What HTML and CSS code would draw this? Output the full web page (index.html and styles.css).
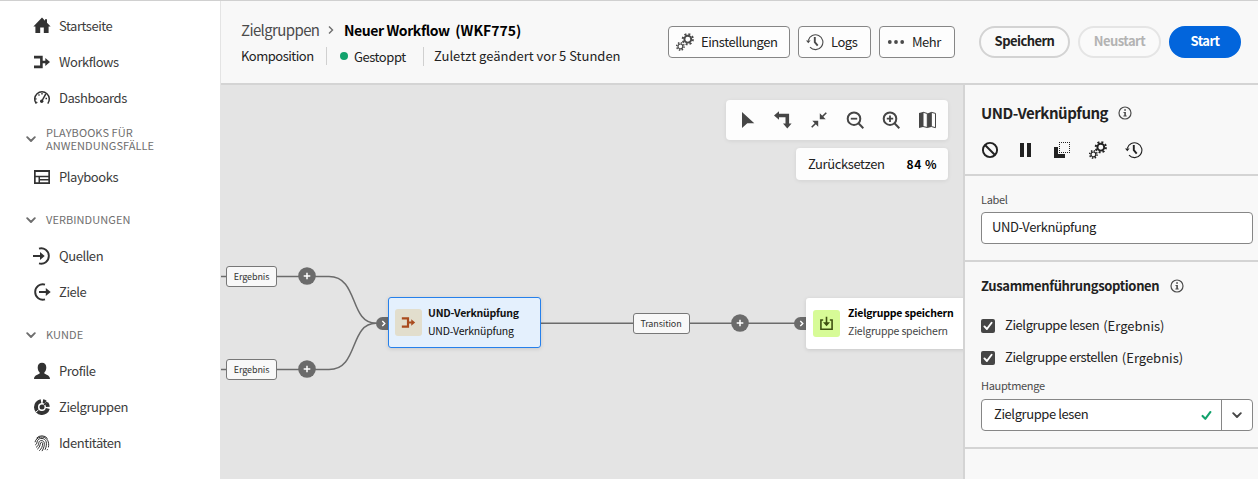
FILE: index.html
```html
<!DOCTYPE html>
<html lang="de">
<head>
<meta charset="utf-8">
<title>Neuer Workflow (WKF775)</title>
<link rel="stylesheet" href="styles.css">
</head>
<body>
<svg class="defs" width="0" height="0">
  <symbol id="gears" viewBox="0 0 18 18">
    <g fill="none" stroke="currentColor">
      <circle cx="11.8" cy="6.2" r="3.4" stroke-width="1.9"/>
      <circle cx="11.8" cy="6.2" r="5.100" stroke-width="2" stroke-dasharray="2 2"/>
      <circle cx="4.4" cy="13.4" r="2.4" stroke-width="1.2"/>
      <circle cx="4.4" cy="13.4" r="3.700" stroke-width="1.6" stroke-dasharray="1.450 1.450"/>
    </g>
  </symbol>
  <symbol id="history" viewBox="0 0 18 18">
    <path d="M2.300 7.500A7.400 7.400 0 1 1 4 14.200" fill="none" stroke="currentColor" stroke-width="1.100"/>
    <path d="M0 7.500h4.600L2.300 10.300z" fill="currentColor"/>
    <path d="M8.800 4v5.200l2.900 3.400" fill="none" stroke="currentColor" stroke-width="1.900"/>
  </symbol>
  <symbol id="merge" viewBox="0 0 18 18">
    <path d="M1 4.100h7.400v9.800H1M8.400 9H13" fill="none" stroke="currentColor" stroke-width="2.600"/>
    <path d="M12.300 5L17 9l-4.700 4z" fill="currentColor"/>
  </symbol>
  <symbol id="chevron" viewBox="0 0 10 10">
    <path d="M1.200 3.200L5 7l3.800-3.800" fill="none" stroke="currentColor" stroke-width="1.900" stroke-linecap="round" stroke-linejoin="round"/>
  </symbol>
  <symbol id="info" viewBox="0 0 14 14">
    <circle cx="7" cy="7" r="6" fill="none" stroke="currentColor" stroke-width="1.200"/>
    <path d="M6.200 3.300h1.700v1.500H6.200zM5.500 6h2.400v3.600h.8v1H5.400v-1h.9V7h-.8z" fill="currentColor"/>
  </symbol>
  <symbol id="check" viewBox="0 0 10 10">
    <path d="M1.400 5.400L3.900 8l4.700-6.200" fill="none" stroke="currentColor" stroke-width="1.900" stroke-linecap="round" stroke-linejoin="round"/>
  </symbol>
  <symbol id="plus" viewBox="0 0 18 18">
    <circle cx="9" cy="9" r="8.800" fill="#6b6b6b"/>
    <path d="M9 5.700v6.600M5.700 9h6.600" stroke="#fff" stroke-width="1.500"/>
  </symbol>
</svg>
<div class="app">
  <nav class="sidebar">
    <a class="nav-item"><svg class="nav-icon" viewBox="0 0 18 18"><path d="M9 .5L.4 9.600h2V16h4.800v-5.400h3.600V16h4.800V9.600h2L14 5.800V2.200h-2v1.500z"/></svg>Startseite</a>
    <a class="nav-item"><svg class="nav-icon"><use href="#merge"/></svg>Workflows</a>
    <a class="nav-item"><svg class="nav-icon" viewBox="0 0 18 18"><g fill="none" stroke="currentColor"><path d="M3.200 14.600A7.300 7.300 0 1 1 14.800 14.600" stroke-width="1.500"/><path d="M4.200 14A6 5.500 0 0 1 4 7.300" stroke-width="1.200" stroke-dasharray="1.500 2"/><path d="M5.500 5.500l1 1M9 4v1.600M14 9.500h-1.500" stroke-width="1.400"/><path d="M12.800 4.800L8.900 12" stroke-width="1.500"/></g><circle cx="8.700" cy="12.200" r="1.700"/></svg>Dashboards</a>
    <h2 class="nav-heading nav-heading-tall"><svg class="chev"><use href="#chevron"/></svg><span>PLAYBOOKS FÜR ANWENDUNGSFÄLLE</span></h2>
    <a class="nav-item"><svg class="nav-icon" viewBox="0 0 18 18"><path d="M1 2h16v14H1z"/><path fill="#fff" d="M2.700 4h12.600v3.700H2.700zM2.700 9.200h2.800v5.100H2.700zM7 9.200h8.300V11H7zM7 12.400h8.300v1.900H7z"/></svg>Playbooks</a>
    <h2 class="nav-heading"><svg class="chev"><use href="#chevron"/></svg><span>VERBINDUNGEN</span></h2>
    <a class="nav-item"><svg class="nav-icon" viewBox="0 0 18 18"><path d="M6 1.600A7.700 7.700 0 1 1 6 16.400" fill="none" stroke="currentColor" stroke-width="1.900"/><path d="M0 8h7V5l4.700 4L7 13v-3H0z"/></svg>Quellen</a>
    <a class="nav-item"><svg class="nav-icon" viewBox="0 0 18 18"><path d="M12 1.600A7.700 7.700 0 1 0 12 16.400" fill="none" stroke="currentColor" stroke-width="1.900"/><path d="M6 8h6.800V5l4.900 4-4.900 4v-3H6z"/></svg>Ziele</a>
    <h2 class="nav-heading"><svg class="chev"><use href="#chevron"/></svg><span>KUNDE</span></h2>
    <a class="nav-item"><svg class="nav-icon" viewBox="0 0 18 18"><path d="M9 .7c2.700 0 4.300 1.800 4.300 4.700 0 2.200-.8 3.900-1.900 4.900v1.200c0 .6 5.600 1.300 5.600 5.500H1c0-4.200 5.600-4.900 5.600-5.500v-1.200c-1.100-1-1.900-2.700-1.900-4.900C4.700 2.500 6.300.7 9 .7z"/></svg>Profile</a>
    <a class="nav-item"><svg class="nav-icon" viewBox="0 0 18 18"><g fill="none" stroke="currentColor"><path d="M8 3.100A6 6 0 1 0 14.800 10.500" stroke-width="4"/><path d="M9.900 3.100A6 6 0 0 1 12.500 4.200M13.500 5.200A6 6 0 0 1 14.900 8.800" stroke-width="3.800"/><path d="M11 7l3-3" stroke-width="1.400"/></g><circle cx="9" cy="9" r="2.500"/><path d="M3 14l2.600-2.200" stroke="#fff"/></svg>Zielgruppen</a>
    <a class="nav-item"><svg class="nav-icon" viewBox="0 0 18 18"><g fill="none" stroke="currentColor" stroke-width="1"><path d="M3.500 4.200a7.300 7.300 0 0 1 11 .3M2 8.200c1-5.500 9.500-7.300 12.600-2 1.200 2.200 1.300 4.800.8 7.200M2.200 11c2-.9 1.500-2.600 2.200-4.200 1.700-3.500 7.700-3.100 8.800 1 .6 2.600 0 5.400-1.200 8M3 13.300c3.200-1.500 2.200-4 3.200-5.600 1.200-1.900 4.400-1.400 5 .9.500 2.700-.5 5.700-2.200 8.500M4.300 15.200c2.900-2 2.500-4.300 3.300-6.300.5-1 1.900-.7 2 .5.200 2.700-1.100 5.300-3.300 7.400M14.600 15.200l-.6 1"/></g></svg>Identitäten</a>
  </nav>
  <main class="main">
    <header class="header">
      <div class="titles">
        <div class="crumbs"><span class="crumb">Zielgruppen</span><svg class="crumb-sep" viewBox="0 0 8 10"><path d="M2 1.500L5.500 5 2 8.500" fill="none" stroke="currentColor" stroke-width="1.400"/></svg><strong class="crumb-now">Neuer Workflow <span class="wkf">(WKF775)</span></strong></div>
        <div class="meta"><span class="kind">Komposition</span><span class="status"><i class="dot"></i><span>Gestoppt</span></span><span class="changed">Zuletzt geändert vor 5 Stunden</span></div>
      </div>
      <div class="actions">
        <button class="btn btn-settings"><svg class="i18"><use href="#gears"/></svg><span>Einstellungen</span></button>
        <button class="btn btn-logs"><svg class="i18"><use href="#history"/></svg><span>Logs</span></button>
        <button class="btn btn-more"><svg class="i18" viewBox="0 0 18 18"><g fill="currentColor"><circle cx="2.800" cy="9" r="1.900"/><circle cx="9" cy="9" r="1.900"/><circle cx="15.200" cy="9" r="1.900"/></g></svg><span>Mehr</span></button>
        <button class="pill pill-save">Speichern</button>
        <button class="pill pill-restart" disabled>Neustart</button>
        <button class="pill pill-start">Start</button>
      </div>
    </header>
    <div class="work">
      <section class="canvas">
        <svg class="edges" viewBox="0 0 743 394" width="743" height="394">
          <g fill="none" stroke="#6b6b6b" stroke-width="1.500">
            <path d="M0 191.500H108C138 191.500 128 238.300 155 238.300H168"/>
            <path d="M0 284.500H108C138 284.500 128 238.300 155 238.300"/>
            <path d="M320 238.300H586"/>
          </g>
        </svg>
        <span class="tag tag-a">Ergebnis</span><svg class="add add-a"><use href="#plus"/></svg>
        <span class="tag tag-b">Ergebnis</span><svg class="add add-b"><use href="#plus"/></svg>
        <span class="tag tag-c">Transition</span><svg class="add add-c"><use href="#plus"/></svg>
        <svg class="port port-a" viewBox="0 0 13 13"><path d="M13 0H6.500a6.500 6.500 0 0 0 0 13H13z" fill="#6b6b6b"/><path d="M6.300 4l2.500 2.500L6.300 9" fill="none" stroke="#fff" stroke-width="1.400"/></svg>
        <svg class="port port-b" viewBox="0 0 13 13"><path d="M13 0H6.500a6.500 6.500 0 0 0 0 13H13z" fill="#6b6b6b"/><path d="M6.300 4l2.500 2.500L6.300 9" fill="none" stroke="#fff" stroke-width="1.400"/></svg>
        <div class="node node-and">
          <span class="node-icon"><svg viewBox="0 0 18 18"><use href="#merge"/></svg></span>
          <div class="node-text"><b>UND-Verknüpfung</b><span>UND-Verknüpfung</span></div>
        </div>
        <div class="node node-save">
          <span class="node-icon"><svg viewBox="0 0 18 18"><path d="M5 4.800H2.300v11h13.400v-11H13M9 1v8" fill="none" stroke="currentColor" stroke-width="1.900"/><path d="M4.800 7.500h8.400L9 12.200z" fill="currentColor"/></svg></span>
          <div class="node-text"><b>Zielgruppe speichern</b><span>Zielgruppe speichern</span></div>
        </div>
        <div class="tools">
          <svg viewBox="0 0 18 18"><path d="M4 1L16.300 12.200H9.300L4 17z" fill="currentColor"/></svg>
          <svg viewBox="0 0 18 18"><path d="M4 4.500h9.300V13" fill="none" stroke="currentColor" stroke-width="3.600"/><path d="M5 .3v8.400L0 4.500zM9 12.500h8.600L13.300 17.500z" fill="currentColor"/></svg>
          <svg viewBox="0 0 18 18"><path d="M1.700 16.300l4.800-4.800M16.300 1.700l-4.800 4.800" stroke="currentColor" stroke-width="1.600"/><path d="M2.300 9.800h5.900v5.900zM9.800 2.300v5.900h5.900z" fill="currentColor"/></svg>
          <svg viewBox="0 0 18 18"><g fill="none" stroke="currentColor" stroke-width="2"><circle cx="8" cy="7.700" r="6.300"/><path d="M12.500 12.300l4.800 4.900"/><path d="M4.800 7.700h6.400" stroke-width="1.800"/></g></svg>
          <svg viewBox="0 0 18 18"><g fill="none" stroke="currentColor" stroke-width="2"><circle cx="8" cy="7.700" r="6.300"/><path d="M12.500 12.300l4.800 4.900"/><path d="M4.800 7.700h6.400M8 4.500v6.400" stroke-width="1.800"/></g></svg>
          <svg viewBox="0 0 18 18"><path d="M1 2L5 1v15L1 17zM9.300 2.500l4-1.500v15l-4 1z" fill="currentColor"/><path d="M5 1.200l4.300 1.300v14L5 15.500zM13.300 1.300l4.200 1.100v14.300l-4.200-1.200z" fill="none" stroke="currentColor"/></svg>
        </div>
        <div class="zoom"><span>Zurücksetzen</span><b>84 %</b></div>
      </section>
      <aside class="panel">
        <section class="panel-head">
          <h1>UND-Verknüpfung<svg class="i14"><use href="#info"/></svg></h1>
          <div class="panel-tools">
            <svg viewBox="0 0 18 18"><g fill="none" stroke="currentColor" stroke-width="1.900"><circle cx="9" cy="9" r="7.100"/><path d="M4 4l10 10"/></g></svg>
            <svg viewBox="0 0 18 18"><path d="M3 2h4v14H3zM10 2h4v14h-4z" fill="currentColor"/></svg>
            <svg viewBox="0 0 18 18"><path d="M1 6h4v7h7v4H1z" fill="currentColor"/><path d="M6 1.500h11M6 11.500h11M6.500 1v11M16.500 1v11" fill="none" stroke="currentColor" stroke-dasharray="1 1"/></svg>
            <svg><use href="#gears"/></svg>
            <svg><use href="#history"/></svg>
          </div>
        </section>
        <section class="panel-label">
          <label>Label</label>
          <div class="field">UND-Verknüpfung</div>
        </section>
        <section class="panel-options">
          <h3>Zusammenführungsoptionen<svg class="i14"><use href="#info"/></svg></h3>
          <div class="option"><span class="box"><svg><use href="#check"/></svg></span><span class="opt">Zielgruppe lesen</span><span class="result">(Ergebnis)</span></div>
          <div class="option"><span class="box"><svg><use href="#check"/></svg></span><span class="opt">Zielgruppe erstellen</span><span class="result">(Ergebnis)</span></div>
          <label>Hauptmenge</label>
          <div class="combo"><span class="combo-text">Zielgruppe lesen</span><svg class="ok"><use href="#check"/></svg><span class="combo-btn"><svg><use href="#chevron"/></svg></span></div>
        </section>
      </aside>
    </div>
  </main>
</div>
</body>
</html>
```

FILE: styles.css
```css
* { box-sizing: border-box; }
body {
  margin: 0;
  font-family: "Noto Sans CJK JP", "Noto Sans", sans-serif;
  font-size: 13px;
  line-height: 18px;
  letter-spacing: -0.45px;
  color: #222;
  overflow: hidden;
}
svg { display: block; flex: none; overflow: visible; }
.defs { position: absolute; }
h1, h2, h3 { margin: 0; }
button { font-family: inherit; padding: 0; white-space: nowrap; }

.app { display: flex; width: 1258px; height: 479px; border-top: 1px solid #d0d0d0; background: #fff; }

.sidebar { width: 220px; flex: none; padding-top: 7px; }
.nav-item { display: flex; align-items: center; gap: 8px; height: 36px; padding-left: 33px; color: #3c3c3c; }
.nav-icon { width: 18px; height: 18px; color: #323232; fill: currentColor; }
.nav-heading {
  display: flex; align-items: center; gap: 10px; height: 43px; padding: 18px 0 12px 26px;
  font-size: 11px; line-height: 13px; font-weight: 400; color: #6e6e6e; letter-spacing: 0.07px;
}
.nav-heading span { width: 120px; }
.nav-heading-tall { padding: 10px 0 7px 26px; }
.chev { width: 10px; height: 10px; }

.main { flex: 1; min-width: 0; display: flex; flex-direction: column; border-left: 1px solid #e4e4e4; }
.header { display: flex; justify-content: space-between; height: 84px; padding: 18px 17px 0 20px; background: #f8f8f8; border-bottom: 2px solid #d4d4d4; }
.crumbs { display: flex; align-items: center; height: 22px; font-size: 15px; line-height: 22px; }
.crumb { width: 79px; color: #4b4b4b; white-space: nowrap; letter-spacing: -0.62px; }
.crumb-sep { width: 8px; height: 10px; margin: 0 9px 0 7px; color: #6e6e6e; }
.crumb-now { color: #000; font-size: 14px; letter-spacing: -0.42px; white-space: nowrap; }
.wkf { margin-left: 3px; letter-spacing: 0; }
.meta { display: flex; align-items: center; height: 18px; margin-top: 6px; white-space: nowrap; }
.kind { width: 86px; border-right: 1px solid #d0d0d0; letter-spacing: -0.5px; }
.status { display: flex; align-items: center; width: 97px; padding-left: 13px; border-right: 1px solid #d0d0d0; }
.status span { padding-top: 1px; }
.dot { width: 8px; height: 8px; margin-right: 6px; border-radius: 50%; background: #12a26c; }
.changed { padding-left: 10px; letter-spacing: 0; }

.actions { display: flex; height: 32px; margin-top: 7px; }
.btn { display: flex; align-items: center; gap: 7px; height: 32px; padding-left: 7px; margin-right: 8px; border: 1px solid #868686; border-radius: 4px; background: #fdfdfd; font-size: 13px; color: #222; letter-spacing: -0.45px; }
.btn span { padding-bottom: 2px; }
.i18 { width: 18px; height: 18px; color: #4b4b4b; }
.btn-settings { width: 122px; }
.btn-logs { width: 73px; }
.btn-more { width: 76px; margin-right: 24px; }
.pill { height: 32px; border: 2px solid #d3d3d3; border-radius: 16px; background: #fafafa; font-size: 13px; font-weight: 700; line-height: 18px; padding-bottom: 2px; color: #222; letter-spacing: -0.55px; }
.pill-save { width: 91px; margin-right: 8px; }
.pill-restart { width: 83px; margin-right: 8px; border-color: #e5e5e5; color: #b3b3b3; }
.pill-start { width: 72px; border-color: #0265dc; background: #0265dc; color: #fff; }

.work { flex: 1; display: flex; min-height: 0; }
.canvas { position: relative; flex: 1; overflow: hidden; background: #e4e4e4; }
.edges { position: absolute; left: 0; top: 0; }
.tag { position: absolute; height: 21px; border: 1px solid #777; border-radius: 3px; background: #f8f8f8; font-size: 9px; line-height: 19px; text-align: center; color: #333; letter-spacing: -0.1px; }
.tag-a { left: 5px; top: 181px; width: 51px; }
.tag-b { left: 5px; top: 273.500px; width: 51px; }
.tag-c { left: 411.500px; top: 228px; width: 57px; }
.add { position: absolute; width: 18px; height: 18px; }
.add-a { left: 77px; top: 182px; }
.add-b { left: 77px; top: 275px; }
.add-c { left: 510px; top: 229px; }
.port { position: absolute; width: 13px; height: 13px; top: 231.800px; }
.port-a { left: 155px; }
.port-b { left: 573px; }
.node { position: absolute; display: flex; align-items: center; height: 51px; border-radius: 3px; background: #fff; box-shadow: 0 1px 4px rgba(0,0,0,.12); }
.node-and { left: 167px; top: 212px; width: 153px; padding-left: 6px; border: 1px solid #2680eb; background: #e4f0fd; }
.node-save { left: 585px; top: 213px; width: 180px; padding-left: 7px; }
.node-icon { display: flex; align-items: center; justify-content: center; flex: none; width: 27px; height: 27px; margin-right: 6px; border-radius: 3px; background: #e2decd; color: #a94b1e; }
.node-icon svg { width: 15px; height: 15px; }
.node-save .node-icon { background: #d7fb97; color: #3d4f10; }
.node-text { display: flex; flex-direction: column; padding-bottom: 1px; font-size: 10.500px; line-height: 18px; letter-spacing: -0.2px; white-space: nowrap; color: #111; }
.node-save span { color: #444; }
.node-save b { color: #000; }
.node-save .node-text { padding-bottom: 4px; margin-left: 2px; letter-spacing: -0.2px; }

.tools { position: absolute; left: 505px; top: 15px; display: flex; align-items: center; gap: 18px; width: 222px; height: 40px; padding-left: 12px; border-radius: 4px; background: #fdfdfd; color: #464646; box-shadow: 0 1px 4px rgba(0,0,0,.08); }
.tools svg { width: 18px; height: 18px; }
.zoom { position: absolute; left: 575px; top: 63px; display: flex; align-items: center; justify-content: space-between; width: 152px; height: 32px; padding: 0 11px 0 12px; border-radius: 4px; background: #fdfdfd; letter-spacing: -0.4px; box-shadow: 0 1px 4px rgba(0,0,0,.08); }
.zoom b { font-size: 12px; color: #000; letter-spacing: 0.5px; }

.panel { width: 295px; flex: none; border-left: 2px solid #d4d4d4; background: #f8f8f8; }
.panel section { padding-left: 16px; border-bottom: 2px solid #d4d4d4; }
.panel-head { height: 91px; padding-top: 17px; }
.panel h1 { display: flex; align-items: center; gap: 10px; height: 22px; font-size: 15px; line-height: 22px; letter-spacing: -0.47px; }
.i14 { width: 14px; height: 14px; color: #4b4b4b; }
.panel-tools { display: flex; gap: 18px; margin-top: 17px; color: #222; }
.panel-tools svg { width: 18px; height: 18px; }
.panel-label { height: 86px; padding-top: 15px; }
label { display: block; font-size: 11px; line-height: 16px; color: #4b4b4b; letter-spacing: -0.3px; }
.field { width: 272px; height: 32px; margin-top: 5px; padding-left: 10px; border: 1px solid #868686; border-radius: 4px; background: #fff; line-height: 28px; letter-spacing: -0.4px; }
.panel-options { height: 187px; padding-top: 14px; }
.panel h3 { display: flex; align-items: center; gap: 11px; height: 20px; font-size: 13px; line-height: 20px; letter-spacing: -0.36px; }
.option { display: flex; align-items: center; height: 32px; white-space: nowrap; letter-spacing: -0.42px; }
h3 + .option { margin-top: 14px; }
.opt { padding-bottom: 2px; }
.box { display: flex; align-items: center; justify-content: center; width: 14px; height: 14px; margin-right: 10px; border-radius: 2px; background: #464646; color: #fff; }
.box svg { width: 10px; height: 10px; }
.result { margin-left: 4px; letter-spacing: 0; }
.panel-options label { margin-top: 3px; }
.combo { display: flex; align-items: center; width: 272px; height: 32px; margin-top: 6px; padding-left: 12px; border: 1px solid #868686; border-radius: 4px; background: #fff; letter-spacing: -0.42px; }
.combo-text { flex: 1; padding-bottom: 2px; }
.ok { width: 11px; height: 11px; margin-right: 9px; color: #12a26c; }
.combo-btn { display: flex; align-items: center; justify-content: center; width: 31px; height: 30px; border-left: 1px solid #868686; color: #464646; }
.combo-btn svg { width: 10px; height: 10px; }
```
